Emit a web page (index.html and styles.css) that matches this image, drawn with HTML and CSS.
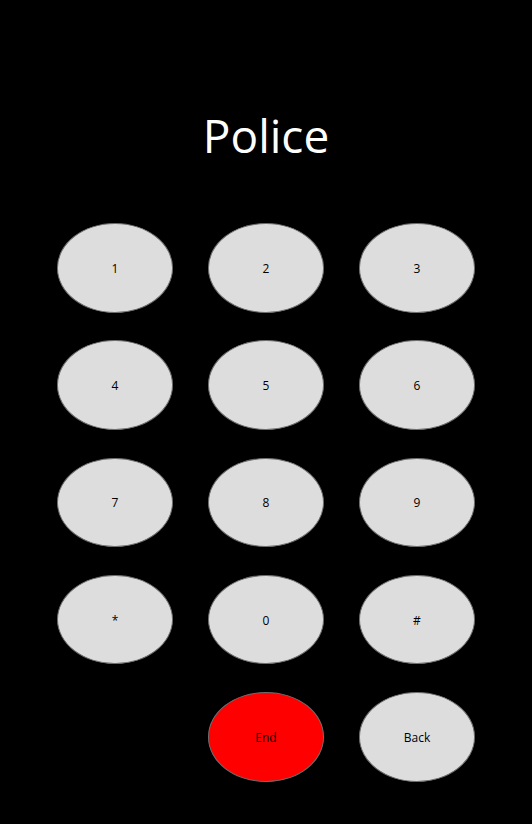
FILE: index.html
```html
<!DOCTYPE html>
<html>
<head>
<meta charset="utf-8">
<link rel="stylesheet" href="styles.css">
</head>
<body>
<main class="dialer">
  <h1 class="title">Police</h1>
  <div class="pad">
    <button class="key">1</button>
    <button class="key">2</button>
    <button class="key">3</button>
    <button class="key">4</button>
    <button class="key">5</button>
    <button class="key">6</button>
    <button class="key">7</button>
    <button class="key">8</button>
    <button class="key">9</button>
    <button class="key">*</button>
    <button class="key">0</button>
    <button class="key">#</button>
    <span class="blank"></span>
    <button class="key end">End</button>
    <button class="key">Back</button>
  </div>
</main>
</body>
</html>
```
FILE: styles.css
```css
html, body {
  margin: 0;
  padding: 0;
  background: #000;
}
body {
  width: 532px;
  height: 824px;
  overflow: hidden;
  font-family: "Open Sans", "Noto Sans", sans-serif;
}
.dialer {
  display: flex;
  flex-direction: column;
  align-items: center;
  padding-top: 103px;
}
.title {
  margin: 0 0 56px;
  font-size: 46px;
  line-height: 64px;
  font-weight: 400;
  color: #fff;
}
.pad {
  display: grid;
  grid-template-columns: repeat(3, 116px);
  grid-auto-rows: 89.5px;
  column-gap: 35px;
  row-gap: 27.8px;
}
.key {
  margin: 0;
  padding: 1px 0 0;
  border: 1px solid #6e6e6e;
  border-radius: 50%;
  background: #dddddd;
  color: #000;
  font-family: "Open Sans", "Noto Sans", sans-serif;
  font-size: 12px;
  display: flex;
  align-items: center;
  justify-content: center;
}
.key.end {
  background: #ff0000;
}
```
